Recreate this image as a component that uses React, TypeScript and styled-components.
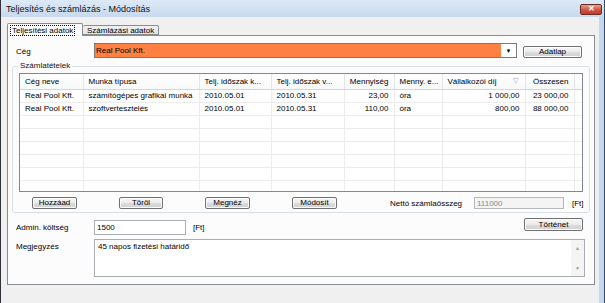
import React from 'react';
import styled, { createGlobalStyle } from 'styled-components';

const Global = createGlobalStyle`
  html, body { margin: 0; padding: 0; }
  body {
    width: 605px; height: 303px; overflow: hidden; background: #f0f0f0;
    font-family: "Liberation Sans", Arial, sans-serif; font-size: 8px; color: #000;
  }
  * { box-sizing: border-box; }
`;

const Window = styled.div`
  width: 605px; height: 303px; display: flex; flex-direction: column;
  border-left: 1px solid #2f3236; border-right: 1px solid #34495e;
`;

const TitleBar = styled.div`
  height: 17px; flex: none; display: flex; align-items: center; justify-content: space-between;
  padding: 1px 2px 0 5px;
  background: linear-gradient(#dde9f6, #c7d9ee);
`;

const Title = styled.span`
  font-size: 9px; color: #111;
`;

const CloseButton = styled.div`
  width: 22px; height: 11px; margin-top: 0; border: 1px solid #6b2b22; border-radius: 2px;
  background: linear-gradient(#e6a092, #cf5a45 50%, #c0392b);
  color: #fff; font-size: 8px; font-weight: bold; display: flex; align-items: center; justify-content: center;
  line-height: 1;
`;

const Body = styled.div`
  flex: 1; display: flex; flex-direction: column; padding: 6px 0 0 6px;
  border-right: 5px solid #c3d7ee;
`;

const Tabs = styled.div`
  display: flex; align-items: flex-end; height: 12px; position: relative; z-index: 1;
`;

const Tab = styled.div<{ $active?: boolean }>`
  height: ${p => (p.$active ? 13 : 10)}px;
  margin-bottom: ${p => (p.$active ? -1 : 0)}px;
  padding: 0 2px;
  display: flex; align-items: center;
  border: 1px solid #898c95; border-bottom: ${p => (p.$active ? 'none' : '1px solid #898c95')};
  border-left-width: ${p => (p.$active ? 1 : 0)}px;
  background: ${p => (p.$active ? '#fcfcfc' : 'linear-gradient(#f2f2f2, #e3e3e3)')};
  border-radius: 2px 2px 0 0;
  width: 76px;
`;

const TabLabel = styled.span<{ $focus?: boolean }>`
  padding: 0 1px; line-height: 9px;
  border: 1px dotted ${p => (p.$focus ? '#000' : 'transparent')};
  white-space: nowrap;
`;

const Panel = styled.div`
  width: 588px; height: 250px; border: 1px solid #898c95; background: #fcfcfc;
  display: flex; flex-direction: column;
`;

const Row = styled.div<{ $mt: number }>`
  display: flex; align-items: flex-start; margin-top: ${p => p.$mt}px; padding-left: 8px;
`;

const Label = styled.div<{ $mt?: number }>`
  width: 78px; flex: none; margin-top: ${p => p.$mt ?? 0}px; white-space: nowrap;
`;

const Combo = styled.div`
  width: 423px; height: 15px; border: 1px solid #7a7a7a; display: flex; background: #fff;
`;

const ComboValue = styled.div`
  flex: 1; background: #ff8040; padding-left: 1px; display: flex; align-items: center;
`;

const ComboArrow = styled.div`
  width: 15px; display: flex; align-items: center; justify-content: center; font-size: 6px;
`;

const Button = styled.button<{ $w: number; $h?: number; $mt?: number }>`
  width: ${p => p.$w}px; height: ${p => p.$h ?? 12}px; margin-top: ${p => p.$mt ?? 0}px;
  flex: none; padding: 0;
  border: 1px solid #707070; border-radius: 2px;
  background: linear-gradient(#f6f6f6, #ebebeb 50%, #dcdcdc 51%, #d0d0d0);
  font-family: inherit; font-size: 8px; color: #000; line-height: 1;
  box-shadow: inset 0 0 0 1px #fcfcfc;
`;

const GroupBox = styled.div`
  position: relative; margin: 8px 0 0 4px; width: 578px;
  border: 1px solid #d5dfe5; border-radius: 3px; padding: 6px 6px 3px 6px;
`;

const Legend = styled.span`
  position: absolute; top: -6px; left: 5px; padding: 0 2px; background: #fcfcfc; line-height: 10px;
  color: #111;
`;

const Grid = styled.div`
  width: 564px; height: 119px; border: 1px solid #828790; background: #fff; overflow: hidden;
`;

const Table = styled.table`
  border-collapse: collapse; table-layout: fixed; width: 562px;
`;

const Th = styled.th<{ $right?: boolean }>`
  height: 15px; padding: 0 5px; font-weight: normal; text-align: ${p => (p.$right ? 'right' : 'left')};
  border-right: 1px solid #e3e5e8; border-bottom: 1px solid #d5d5d5;
  background: linear-gradient(#ffffff, #f7f8f9);
  white-space: nowrap; overflow: hidden;
`;

const Td = styled.td<{ $right?: boolean }>`
  height: 13px; padding: 0 5px; text-align: ${p => (p.$right ? 'right' : 'left')};
  border-right: 1px solid #ececec; border-bottom: 1px solid #ececec;
  white-space: nowrap; overflow: hidden;
`;

const SortHead = styled.div`
  display: flex; justify-content: space-between; align-items: center;
`;

const SortMark = styled.span`
  color: #9aa3ad; font-size: 7px; margin-right: 2px;
`;

const ButtonRow = styled.div`
  display: flex; align-items: center; margin-top: 5px; padding-left: 13px; height: 12px;
`;

const ButtonGroup = styled.div`
  display: flex; gap: 42px;
`;

const Inline = styled.span<{ $ml: number; $w?: number }>`
  margin-left: ${p => p.$ml}px; width: ${p => (p.$w ? `${p.$w}px` : 'auto')}; flex: none; white-space: nowrap;
`;

const Input = styled.div<{ $w: number; $h: number; $disabled?: boolean; $mt?: number }>`
  width: ${p => p.$w}px; height: ${p => p.$h}px; margin-top: ${p => p.$mt ?? 0}px; flex: none;
  border: 1px solid ${p => (p.$disabled ? '#b5b8bd' : '#abadb3')};
  background: ${p => (p.$disabled ? '#f4f4f4' : '#fff')};
  color: ${p => (p.$disabled ? '#8a8a8a' : '#000')};
  padding-left: 2px; display: flex; align-items: center;
`;

const Spacer = styled.div`flex: 1;`;

const TextArea = styled.div`
  width: 491px; height: 38px; border: 1px solid #abadb3; background: #fff; display: flex;
`;

const TextContent = styled.div`
  flex: 1; padding: 2px 3px;
`;

const Scrollbar = styled.div`
  width: 13px; background: #f4f4f4; display: flex; flex-direction: column; justify-content: space-between;
  align-items: center; padding: 5px 0; color: #9a9a9a; font-size: 5px;
`;

const cols = [63, 116, 72, 73, 50, 48, 83, 49, 8];

const rows = [
  ['Real Pool Kft.', 'számítógépes grafikai munka', '2010.05.01', '2010.05.31', '23,00', 'óra', '1 000,00', '23 000,00'],
  ['Real Pool Kft.', 'szoftvertesztelés', '2010.05.01', '2010.05.31', '110,00', 'óra', '800,00', '88 000,00'],
];

const rightCols = [4, 6, 7];

export default function App() {
  const empty = Array.from({ length: 6 }, () => Array(8).fill(''));
  return (
    <>
      <Global />
      <Window>
        <TitleBar>
          <Title>Teljesítés és számlázás - Módosítás</Title>
          <CloseButton>✕</CloseButton>
        </TitleBar>
        <Body>
          <Tabs>
            <Tab $active><TabLabel $focus>Teljesítési adatok</TabLabel></Tab>
            <Tab><TabLabel>Számlázási adatok</TabLabel></Tab>
          </Tabs>
          <Panel>
            <Row $mt={7}>
              <Label $mt={4}>Cég</Label>
              <Combo>
                <ComboValue>Real Pool Kft.</ComboValue>
                <ComboArrow>▼</ComboArrow>
              </Combo>
              <Button $w={59} $mt={3} style={{ marginLeft: 6 }}>Adatlap</Button>
            </Row>
            <GroupBox>
              <Legend>Számlatételek</Legend>
              <Grid>
                <Table>
                  <colgroup>
                    {cols.map((w, i) => <col key={i} style={{ width: w }} />)}
                  </colgroup>
                  <thead>
                    <tr>
                      <Th>Cég neve</Th>
                      <Th>Munka típusa</Th>
                      <Th>Telj. időszak k...</Th>
                      <Th>Telj. időszak v...</Th>
                      <Th $right>Mennyiség</Th>
                      <Th>Menny. e...</Th>
                      <Th><SortHead><span>Vállalkozói díj</span><SortMark>▽</SortMark></SortHead></Th>
                      <Th $right>Összesen</Th>
                      <Th />
                    </tr>
                  </thead>
                  <tbody>
                    {[...rows, ...empty].map((r, i) => (
                      <tr key={i}>
                        {r.map((c, j) => <Td key={j} $right={rightCols.includes(j)}>{c}</Td>)}
                        <Td />
                      </tr>
                    ))}
                  </tbody>
                </Table>
              </Grid>
              <ButtonRow>
                <ButtonGroup>
                  <Button $w={45}>Hozzáad</Button>
                  <Button $w={44}>Töröl</Button>
                  <Button $w={45}>Megnéz</Button>
                  <Button $w={45}>Módosít</Button>
                </ButtonGroup>
                <Inline $ml={53} $w={84}>Nettó számlaösszeg</Inline>
                <Input $w={90} $h={12} $disabled>111000</Input>
                <Inline $ml={8}>[Ft]</Inline>
              </ButtonRow>
            </GroupBox>
            <Row $mt={5}>
              <Label $mt={5}>Admin. költség</Label>
              <Input $w={92} $h={15} $mt={2}>1500</Input>
              <Inline $ml={7} style={{ marginTop: 5 }}>[Ft]</Inline>
              <Spacer />
              <Button $w={59} $h={13} style={{ marginRight: 11 }}>Történet</Button>
            </Row>
            <Row $mt={4}>
              <Label $mt={3}>Megjegyzés</Label>
              <TextArea>
                <TextContent>45 napos fizetési határidő</TextContent>
                <Scrollbar><span>▲</span><span>▼</span></Scrollbar>
              </TextArea>
            </Row>
          </Panel>
        </Body>
      </Window>
    </>
  );
}
